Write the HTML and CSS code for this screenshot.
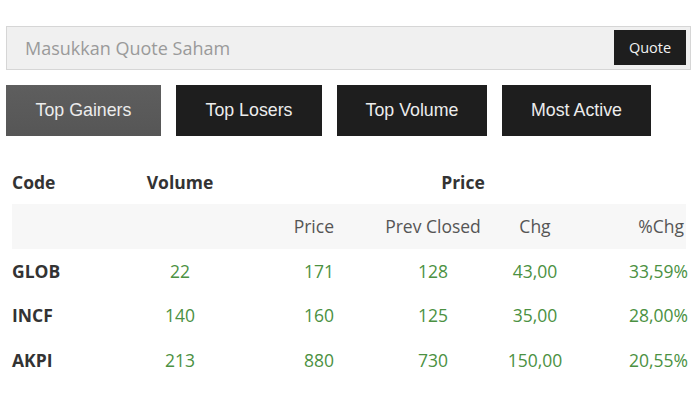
FILE: index.html
```html
<!DOCTYPE html>
<html>
<head>
<meta charset="utf-8">
<link rel="stylesheet" href="styles.css">
</head>
<body>
<div class="page">
  <div class="search">
    <span class="placeholder">Masukkan Quote Saham</span>
    <button class="quote-btn">Quote</button>
  </div>
  <div class="tabs">
    <div class="tab active">Top Gainers</div>
    <div class="tab">Top Losers</div>
    <div class="tab">Top Volume</div>
    <div class="tab">Most Active</div>
  </div>
  <div class="table">
    <div class="row head">
      <div class="c-code">Code</div>
      <div class="c-vol">Volume</div>
      <div class="c-span">Price</div>
    </div>
    <div class="row sub">
      <div class="c-code"></div>
      <div class="c-vol"></div>
      <div class="c-price">Price</div>
      <div class="c-prev">Prev Closed</div>
      <div class="c-chg">Chg</div>
      <div class="c-pct">%Chg</div>
    </div>
    <div class="row data">
      <div class="c-code">GLOB</div>
      <div class="c-vol">22</div>
      <div class="c-price">171</div>
      <div class="c-prev">128</div>
      <div class="c-chg">43,00</div>
      <div class="c-pct">33,59%</div>
    </div>
    <div class="row data">
      <div class="c-code">INCF</div>
      <div class="c-vol">140</div>
      <div class="c-price">160</div>
      <div class="c-prev">125</div>
      <div class="c-chg">35,00</div>
      <div class="c-pct">28,00%</div>
    </div>
    <div class="row data">
      <div class="c-code">AKPI</div>
      <div class="c-vol">213</div>
      <div class="c-price">880</div>
      <div class="c-prev">730</div>
      <div class="c-chg">150,00</div>
      <div class="c-pct">20,55%</div>
    </div>
  </div>
</div>
</body>
</html>
```
FILE: styles.css
```css
html, body {
  margin: 0;
  padding: 0;
  background: #ffffff;
}
.page {
  width: 685px;
  margin-left: 6px;
  padding-top: 26px;
  font-family: "Open Sans", "Liberation Sans", sans-serif;
}
.search {
  height: 42px;
  border: 1px solid #d6d6d6;
  background: #f0f0f0;
  display: flex;
  align-items: center;
  justify-content: space-between;
  padding: 0 4px 0 18px;
}
.placeholder {
  font-size: 18px;
  color: #9a9a9a;
}
.quote-btn {
  height: 35px;
  width: 72px;
  border: none;
  background: #1e1e1e;
  color: #f2f2f2;
  font-family: "Open Sans", "Liberation Sans", sans-serif;
  font-size: 14.5px;
  padding: 0;
  margin-top: -1px;
}
.tabs {
  display: flex;
  gap: 15px;
  margin-top: 15px;
}
.tab {
  box-sizing: border-box;
  height: 51px;
  display: flex;
  align-items: center;
  justify-content: center;
  background: #1e1e1e;
  color: #ececec;
  font-family: "Liberation Sans", Arial, sans-serif;
  font-size: 17.8px;
}
.tab:nth-child(1) { width: 155px; }
.tab:nth-child(2) { width: 146px; }
.tab:nth-child(3) { width: 150px; }
.tab:nth-child(4) { width: 149px; }
.tab.active {
  background: linear-gradient(#5e5e5e, #565656);
}
.table {
  margin-top: 24px;
  margin-left: 6px;
  width: 674px;
  font-size: 17.5px;
}
.row {
  display: grid;
  grid-template-columns: 108px 120px 140px 106px 98px 102px;
  height: 44.5px;
  align-items: center;
}
.row.head {
  font-weight: 700;
  color: #333333;
  height: 44px;
}
.c-span {
  grid-column: 3 / 7;
  text-align: center;
}
.row.sub {
  background: #f7f7f7;
  color: #555555;
}
.row.data {
  color: #4b9142;
}
.row.data .c-code {
  font-weight: 700;
  color: #333333;
}
.c-vol { text-align: center; }
.c-price { text-align: right; padding-right: 46px; }
.c-prev { text-align: center; }
.c-chg { text-align: center; }
.c-pct { text-align: right; margin-right: -2px; }
.row.sub .c-pct { margin-right: 2px; }
```
